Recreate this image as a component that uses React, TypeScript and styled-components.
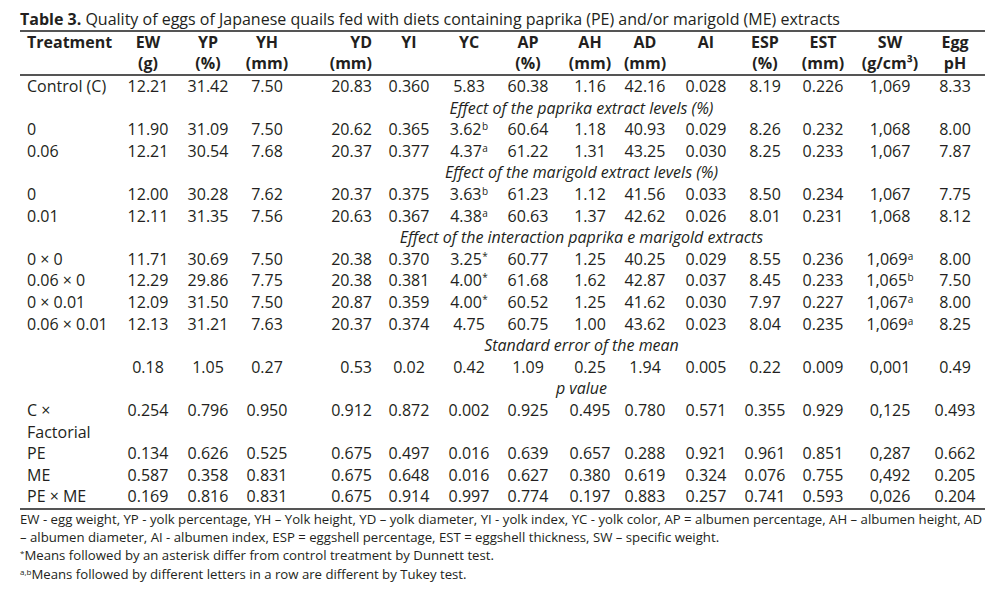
import React from "react";
import styled, { createGlobalStyle } from "styled-components";

const GlobalStyle = createGlobalStyle`
  html, body { margin: 0; padding: 0; background: #ffffff; }
  body { font-family: "Open Sans", "Noto Sans", sans-serif; color: #231f20; }
`;

const COLS = "98px 60px 60px 58px 84px 58px 62px 56px 68px 42px 80px 38px 78px 56px 67px";

const Page = styled.div`
  padding: 9px 19px 0 20px;
  width: 965px;
`;

const Title = styled.div`
  font-size: 16px;
  line-height: 21px;
  white-space: nowrap;
  b { font-weight: 700; }
`;

const Table = styled.div`
  display: flex;
  flex-direction: column;
  border-top: 2px solid #555;
  border-bottom: 2px solid #555;
  font-size: 16px;
`;

const Row = styled.div<{ $head?: boolean }>`
  display: grid;
  grid-template-columns: ${COLS};
  line-height: ${(p) => (p.$head ? "21px" : "21.6px")};
  font-weight: ${(p) => (p.$head ? 700 : 400)};
  ${(p) => (p.$head ? "border-bottom: 2px solid #555;" : "")}
`;

const Label = styled.div`
  padding-left: 7px;
  white-space: nowrap;
`;

const Cell = styled.div<{ $align?: "center" | "right"; $pad?: number }>`
  display: flex;
  flex-direction: column;
  align-items: ${(p) => (p.$align === "right" ? "flex-end" : "center")};
  padding-right: ${(p) => (p.$align === "right" ? "8px" : "0")};
  padding-left: ${(p) => (p.$pad ? `${p.$pad}px` : "0")};
  white-space: nowrap;
`;

const Group = styled.div`
  grid-column: 3 / -1;
  text-align: center;
  font-style: italic;
  white-space: nowrap;
`;

const Sup = styled.sup`
  font-size: 10px;
  line-height: 0;
  vertical-align: 5px;
  margin-left: 0.5px;
`;

const Footer = styled.div`
  font-size: 13.2px;
  line-height: 18.3px;
`;

const FootLine = styled.div`
  white-space: nowrap;
`;

const FootSup = styled.sup`
  font-size: 8px;
  line-height: 0;
  vertical-align: 4px;
`;

type Val = string | [string, string];

const colAlign = (i: number): { $align?: "center" | "right"; $pad?: number } => {
  if (i === 3) return { $align: "right" };
  if (i === 13) return { $pad: 7 };
  return {};
};

const headers: [string, string][] = [
  ["EW", "(g)"],
  ["YP", "(%)"],
  ["YH", "(mm)"],
  ["YD", "(mm)"],
  ["YI", ""],
  ["YC", ""],
  ["AP", "(%)"],
  ["AH", "(mm)"],
  ["AD", "(mm)"],
  ["AI", ""],
  ["ESP", "(%)"],
  ["EST", "(mm)"],
  ["SW", "(g/cm³)"],
  ["Egg", "pH"],
];

type Item =
  | { kind: "row"; label: string; vals: Val[] }
  | { kind: "group"; text: string };

const r = (s: string) => s.split(" ");

const items: Item[] = [
  { kind: "row", label: "Control (C)", vals: r("12.21 31.42 7.50 20.83 0.360 5.83 60.38 1.16 42.16 0.028 8.19 0.226 1,069 8.33") },
  { kind: "group", text: "Effect of the paprika extract levels (%)" },
  { kind: "row", label: "0", vals: [...r("11.90 31.09 7.50 20.62 0.365"), ["3.62", "b"], ...r("60.64 1.18 40.93 0.029 8.26 0.232 1,068 8.00")] },
  { kind: "row", label: "0.06", vals: [...r("12.21 30.54 7.68 20.37 0.377"), ["4.37", "a"], ...r("61.22 1.31 43.25 0.030 8.25 0.233 1,067 7.87")] },
  { kind: "group", text: "Effect of the marigold extract levels (%)" },
  { kind: "row", label: "0", vals: [...r("12.00 30.28 7.62 20.37 0.375"), ["3.63", "b"], ...r("61.23 1.12 41.56 0.033 8.50 0.234 1,067 7.75")] },
  { kind: "row", label: "0.01", vals: [...r("12.11 31.35 7.56 20.63 0.367"), ["4.38", "a"], ...r("60.63 1.37 42.62 0.026 8.01 0.231 1,068 8.12")] },
  { kind: "group", text: "Effect of the interaction paprika e marigold extracts" },
  { kind: "row", label: "0 × 0", vals: [...r("11.71 30.69 7.50 20.38 0.370"), ["3.25", "*"], ...r("60.77 1.25 40.25 0.029 8.55 0.236"), ["1,069", "a"], "8.00"] },
  { kind: "row", label: "0.06 × 0", vals: [...r("12.29 29.86 7.75 20.38 0.381"), ["4.00", "*"], ...r("61.68 1.62 42.87 0.037 8.45 0.233"), ["1,065", "b"], "7.50"] },
  { kind: "row", label: "0 × 0.01", vals: [...r("12.09 31.50 7.50 20.87 0.359"), ["4.00", "*"], ...r("60.52 1.25 41.62 0.030 7.97 0.227"), ["1,067", "a"], "8.00"] },
  { kind: "row", label: "0.06 × 0.01", vals: [...r("12.13 31.21 7.63 20.37 0.374 4.75 60.75 1.00 43.62 0.023 8.04 0.235"), ["1,069", "a"], "8.25"] },
  { kind: "group", text: "Standard error of the mean" },
  { kind: "row", label: "", vals: r("0.18 1.05 0.27 0.53 0.02 0.42 1.09 0.25 1.94 0.005 0.22 0.009 0,001 0.49") },
  { kind: "group", text: "p value" },
  { kind: "row", label: "C ×", vals: r("0.254 0.796 0.950 0.912 0.872 0.002 0.925 0.495 0.780 0.571 0.355 0.929 0,125 0.493") },
  { kind: "row", label: "Factorial", vals: [] },
  { kind: "row", label: "PE", vals: r("0.134 0.626 0.525 0.675 0.497 0.016 0.639 0.657 0.288 0.921 0.961 0.851 0,287 0.662") },
  { kind: "row", label: "ME", vals: r("0.587 0.358 0.831 0.675 0.648 0.016 0.627 0.380 0.619 0.324 0.076 0.755 0,492 0.205") },
  { kind: "row", label: "PE × ME", vals: r("0.169 0.816 0.831 0.675 0.914 0.997 0.774 0.197 0.883 0.257 0.741 0.593 0,026 0.204") },
];

const ValueCell: React.FC<{ v: Val; i: number }> = ({ v, i }) => (
  <Cell {...colAlign(i)}>
    {typeof v === "string" ? (
      <span>{v}</span>
    ) : (
      <span>
        {v[0]}
        <Sup>{v[1]}</Sup>
      </span>
    )}
  </Cell>
);

export default function App() {
  return (
    <>
      <GlobalStyle />
      <Page>
        <Title>
          <b>Table 3.</b> Quality of eggs of Japanese quails fed with diets containing paprika (PE) and/or marigold (ME) extracts
        </Title>
        <Table>
          <Row $head>
            <Label>Treatment</Label>
            {headers.map((h, i) => (
              <Cell key={i} {...colAlign(i)}>
                <span>{h[0]}</span>
                <span>{h[1] || "\u00a0"}</span>
              </Cell>
            ))}
          </Row>
          {items.map((it, k) =>
            it.kind === "group" ? (
              <Row key={k}>
                <Group>{it.text}</Group>
              </Row>
            ) : (
              <Row key={k}>
                <Label>{it.label || "\u00a0"}</Label>
                {it.vals.map((v, i) => (
                  <ValueCell key={i} v={v} i={i} />
                ))}
              </Row>
            )
          )}
        </Table>
        <Footer>
          <FootLine>
            EW - egg weight, YP - yolk percentage, YH – Yolk height, YD – yolk diameter, YI - yolk index, YC - yolk color, AP = albumen percentage, AH – albumen height, AD
          </FootLine>
          <FootLine>
            – albumen diameter, AI - albumen index, ESP = eggshell percentage, EST = eggshell thickness, SW – specific weight.
          </FootLine>
          <FootLine>
            <FootSup>*</FootSup>Means followed by an asterisk differ from control treatment by Dunnett test.
          </FootLine>
          <FootLine>
            <FootSup>a,b</FootSup>Means followed by different letters in a row are different by Tukey test.
          </FootLine>
        </Footer>
      </Page>
    </>
  );
}
